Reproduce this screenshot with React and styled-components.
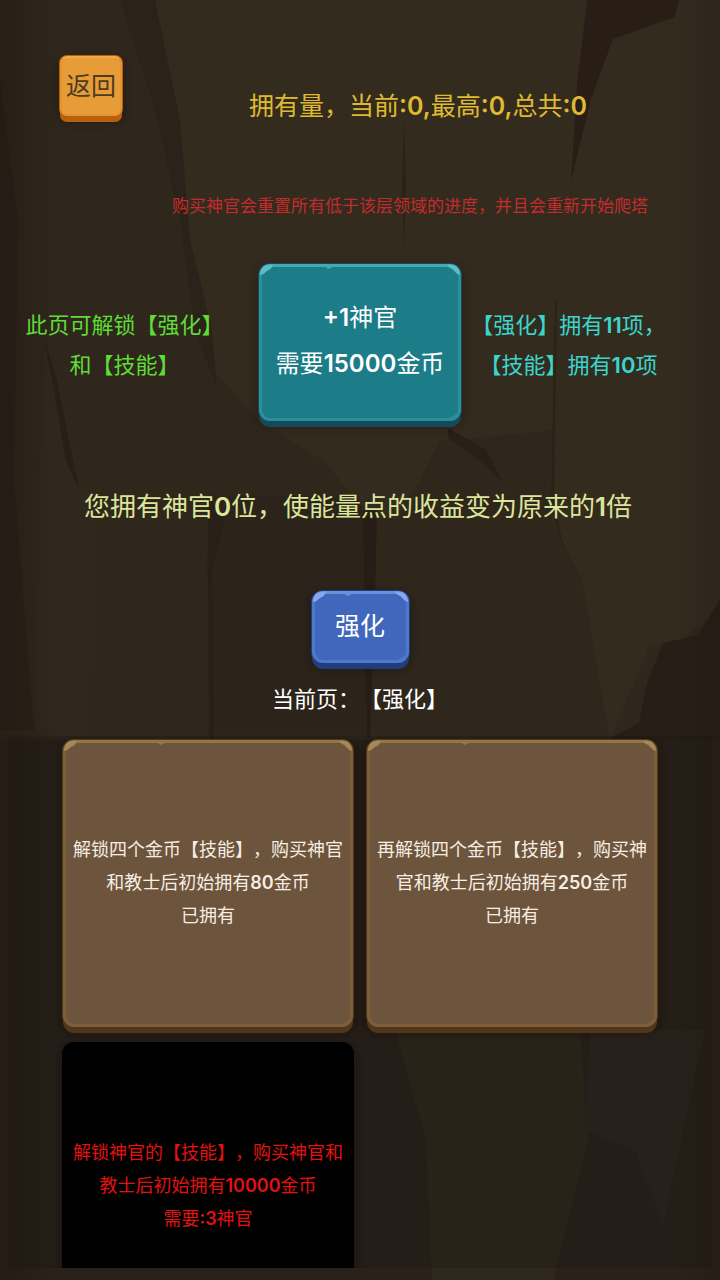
import React from "react";
import styled, { createGlobalStyle } from "styled-components";

const GlobalStyle = createGlobalStyle`
  *, *::before, *::after { box-sizing: border-box; }
  body {
    margin: 0;
    background: #2d251b;
    font-family: "Noto Sans CJK SC", sans-serif;
    text-spacing-trim: space-all;
  }
`;

const Screen = styled.main`
  position: relative;
  isolation: isolate;
  height: 100vh;
  overflow: hidden;
  display: flex;
  flex-direction: column;
  padding: 56px 0 12px;
`;

const Rock = styled.svg`
  position: absolute;
  inset: 0;
  z-index: -1;
  width: 100%;
  height: 100%;
`;

const Header = styled.header`
  display: flex;
  align-items: flex-start;
  padding: 0 60px;
`;

const Slab = styled.button`
  position: relative;
  display: flex;
  flex-direction: column;
  align-items: center;
  border: 0;
  padding: 0;
  font-family: inherit;
  font-weight: 400;
  cursor: pointer;
  color: #fff;
  background: ${(p) => p.$tone.face};
  border: 3px solid ${(p) => p.$tone.side};
  border-top-color: ${(p) => p.$tone.rim};
  border-radius: 11px;
  box-shadow:
    0 6px 0 ${(p) => p.$tone.base},
    0 0 0 1px ${(p) => p.$tone.base},
    0 4px 10px 2px rgba(15, 10, 5, 0.35);
`;

const BackButton = styled(Slab)`
  width: 62px;
  height: 60px;
  border-width: 2px;
  border-radius: 7px;
  color: #4b3d20;
  font-size: 25px;
  line-height: 52px;
  white-space: nowrap;
`;

const BuyButton = styled(Slab)`
  flex: none;
  width: 202px;
  height: 157px;
  padding-top: 26px;
  font-size: 24px;
  line-height: 46px;
`;

const TabButton = styled(Slab)`
  width: 97px;
  height: 72px;
  margin-top: 66px;
  font-size: 25px;
  line-height: 60px;
`;

const Chip = styled.svg`
  position: absolute;
  width: 14px;
  height: 12px;
  ${(p) => (p.$bottom ? "bottom: -3px;" : "top: -3px;")}
  ${(p) => (p.$right ? "right: -3px;" : "left: -3px;")}
  transform: scale(${(p) => (p.$right ? -1 : 1)}, ${(p) => (p.$bottom ? -1 : 1)});
`;

const Nick = styled.svg`
  position: absolute;
  top: -1px;
  left: 32%;
  width: 10px;
  height: 4px;
`;

const Totals = styled.h1`
  flex: 1;
  margin: 28px 0 0;
  padding-left: 127px;
  font-size: 25px;
  line-height: 40px;
  font-weight: 400;
  color: #dfb92f;
  white-space: nowrap;
`;

const Warning = styled.p`
  margin: 68px 0 0;
  padding-left: 100px;
  text-align: center;
  font-size: 17px;
  line-height: 26px;
  color: #c32c2c;
`;

const Purchase = styled.section`
  display: grid;
  grid-template-columns: 1fr 202px 1fr;
  align-items: start;
  margin-top: 46px;
`;

const Note = styled.p`
  margin: 39px 0 0;
  padding-right: ${(p) => p.$inset}px;
  text-align: center;
  font-size: 22px;
  line-height: 40px;
  white-space: nowrap;
  color: ${(p) => p.$color};
`;

const Effect = styled.p`
  margin: 64px 4px 0 0;
  text-align: center;
  font-size: 26px;
  line-height: 40px;
  color: #dce59a;
`;

const Tabs = styled.nav`
  display: flex;
  flex-direction: column;
  align-items: center;
`;

const PageLabel = styled.p`
  margin: 14px 0 0;
  font-size: 22px;
  line-height: 40px;
  color: #fff;
`;

const Upgrades = styled.section`
  flex: 1;
  min-height: 0;
  overflow: hidden;
  display: grid;
  grid-template-columns: 290px 290px;
  grid-auto-rows: 287px;
  gap: 16px 14px;
  justify-content: center;
  margin: 19px 8px 0;
  padding-top: 4px;
  background: rgba(22, 16, 12, 0.22);
`;

const Card = styled(Slab)`
  padding-top: 89px;
  font-size: 18px;
  line-height: 33px;
  color: ${(p) => p.$ink || "#f7eee2"};
`;

const Line = styled.span`
  display: block;
  white-space: nowrap;
`;

const Num = styled.span`
  font-family: Inter, sans-serif;
  font-weight: 600;
  line-height: 1;
`;

const tones = {
  orange: { face: "#e89c37", side: "#e5942f", rim: "#f3a945", base: "#b9600f" },
  teal: { face: "#1c7c88", side: "#2b8f99", rim: "#43a9b0", base: "#16495c", chip: "#5fbcc3" },
  blue: { face: "#4067bb", side: "#4f78cb", rim: "#6a90dc", base: "#223d7c", chip: "#87a8ea" },
  brown: { face: "#6d543d", side: "#7c5f38", rim: "#957446", base: "#52361a", chip: "#a58854" },
  black: { face: "#000", side: "#000", rim: "#000", base: "#000" },
};

function Corners({ tone }) {
  return (
    <>
      <Chip viewBox="0 0 14 12" aria-hidden="true">
        <path d="M1 11C1 4 5 0 14 1c-1 3-3 5-6 6-2 1-3 4-7 4z" fill={tone.chip} />
      </Chip>
      <Chip $right viewBox="0 0 14 12" aria-hidden="true">
        <path d="M1 11C1 4 5 0 14 1c-1 2-3 3-5 4-3 2-4 5-8 6z" fill={tone.chip} />
      </Chip>
      <Chip $bottom viewBox="0 0 14 12" aria-hidden="true">
        <path d="M1 12C1 5 5 1 13 1L9 3C6 4 5 6 4 8z" fill={tone.side} />
      </Chip>
      <Chip $bottom $right viewBox="0 0 14 12" aria-hidden="true">
        <path d="M1 12C1 5 5 1 14 1L10 4C7 5 6 7 3 8z" fill={tone.side} />
      </Chip>
      <Nick viewBox="0 0 10 4" aria-hidden="true">
        <path d="M0 0h10L6 2 3 3z" fill={tone.rim} />
      </Nick>
    </>
  );
}

function Backdrop() {
  return (
    <Rock viewBox="0 0 720 1280" preserveAspectRatio="none" aria-hidden="true">
      <defs>
        <linearGradient id="edge" x1="0" x2="1">
          <stop offset="0" stopColor="#1c130e" stopOpacity=".4" />
          <stop offset=".08" stopColor="#1c130e" stopOpacity="0" />
          <stop offset=".94" stopColor="#1c130e" stopOpacity="0" />
          <stop offset="1" stopColor="#1c130e" stopOpacity=".25" />
        </linearGradient>
      </defs>
      <path d="M0 0h720v1280H0z" fill="#2f271c" />
      <path d="M155 0h435l-18 170-4 110-10 30-4 120-98 10-16 0-20 40-25 40-30-10-42-50-60-35-50-55-25-90-12-100z" fill="#342b1f" />
      <path d="M590 0h130v610l-40 30-30 5-40 95-28-160-30-60 5-220 15-130z" fill="#342b1f" />
      <path d="M120 0h35l25 120 10 120 22 90 5 60-22-60-15-110-25-110z" fill="#2b2319" />
      <path d="M587 0h92l-4 17-62 22-22 60-20 82 6-96z" fill="#291e16" />
      <path d="M0 80l18 140-4 260 20 250H0z" fill="#2a2118" />
      <path d="M45 345l18 40 16 95 18 50-10 200H35l4-250z" fill="#30281d" />
      <path d="M44 340l12 36 14 70 10 45-14-30-12-70z" fill="#281f16" />
      <path d="M208 495h150l12 40-5 200H215l-8-160z" fill="#2c241a" />
      <path d="M208 495l16 25-12 50 2 170h-5z" fill="#281f17" />
      <path d="M363 510h14l-2 90-5 138h-3z" fill="#281c16" />
      <path d="M404 120l2 60-2 70-2-60zM557 300l-3 200 10 50-13-40 4-210z" fill="#2b2218" />
      <path d="M448 428l38 22 18 34-22-22-34-24z" fill="#281f16" />
      <path d="M720 600l-22 35-35 8-16 40-8 40-32 17h113z" fill="#271f17" />
      <path d="M0 740h720v540H0z" fill="#29211a" />
      <path d="M395 1030h185l8 110-35 140H432l-6-140z" fill="#2e281d" />
      <path d="M590 1030h115l-42 195-28-75-50-20z" fill="#2c261f" />
      <path d="M0 0h720v1280H0z" fill="url(#edge)" />
    </Rock>
  );
}

const upgrades = [
  {
    tone: tones.brown,
    lines: ["解锁四个金币【技能】，购买神官", <>和教士后初始拥有<Num>80</Num>金币</>, "已拥有"],
  },
  {
    tone: tones.brown,
    lines: ["再解锁四个金币【技能】，购买神", <>官和教士后初始拥有<Num>250</Num>金币</>, "已拥有"],
  },
  {
    tone: tones.black,
    ink: "#e01212",
    lines: ["解锁神官的【技能】，购买神官和", <>教士后初始拥有<Num>10000</Num>金币</>, <>需要<Num>:3</Num>神官</>],
  },
];

export default function App() {
  return (
    <Screen>
      <GlobalStyle />
      <Backdrop />
      <Header>
        <BackButton type="button" $tone={tones.orange}>返回</BackButton>
        <Totals>
          拥有量，当前<Num>:0,</Num>最高<Num>:0,</Num>总共<Num>:0</Num>
        </Totals>
      </Header>
      <Warning>购买神官会重置所有低于该层领域的进度，并且会重新开始爬塔</Warning>
      <Purchase>
        <Note $color="#5fdc35" $inset={10}>
          <Line>此页可解锁【强化】</Line>
          <Line>和【技能】</Line>
        </Note>
        <BuyButton type="button" $tone={tones.teal}>
          <Corners tone={tones.teal} />
          <Line><Num>+1</Num>神官</Line>
          <Line>需要<Num>15000</Num>金币</Line>
        </BuyButton>
        <Note $color="#3ad6cb" $inset={44}>
          <Line>【强化】拥有<Num>11</Num>项，</Line>
          <Line>【技能】拥有<Num>10</Num>项</Line>
        </Note>
      </Purchase>
      <Effect>
        您拥有神官<Num>0</Num>位，使能量点的收益变为原来的<Num>1</Num>倍
      </Effect>
      <Tabs>
        <TabButton type="button" $tone={tones.blue}>
          <Corners tone={tones.blue} />
          强化
        </TabButton>
        <PageLabel>当前页：【强化】</PageLabel>
      </Tabs>
      <Upgrades>
        {upgrades.map((u, i) => (
          <Card key={i} type="button" $tone={u.tone} $ink={u.ink}>
            {u.tone.chip && <Corners tone={u.tone} />}
            {u.lines.map((l, j) => (
              <Line key={j}>{l}</Line>
            ))}
          </Card>
        ))}
      </Upgrades>
    </Screen>
  );
}
